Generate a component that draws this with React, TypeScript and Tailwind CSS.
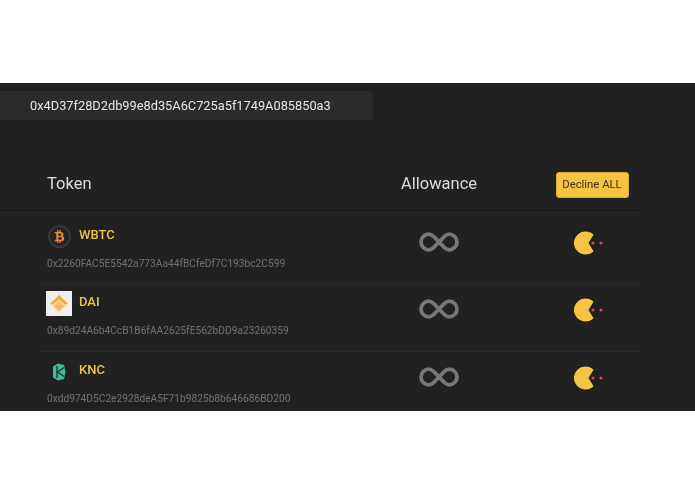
import { FaBtc } from "react-icons/fa";

const font = "font-['Roboto',_'Liberation_Sans',_sans-serif]";

function WbtcIcon() {
  return (
    <div className="flex h-[25px] w-[26px] items-center justify-center">
      <div className="flex h-[23px] w-[23px] items-center justify-center rounded-full border-2 border-[#363644] bg-[#2a2320] text-[#e08a35]">
        <FaBtc size={13} />
      </div>
    </div>
  );
}

function DaiIcon() {
  return (
    <div className="flex h-[25px] w-[26px] items-center justify-center bg-[#eeeeee]">
      <svg width="20" height="20" viewBox="0 0 20 20">
        <path d="M10 1 L19 10 L10 19 L1 10 Z" fill="#f9d9a0" />
        <path d="M10 1 L19 10 L15.5 10 L10 5.5 L4.5 10 L1 10 Z" fill="#f5ac37" />
        <path d="M10 7.5 L14 11 L6 11 Z" fill="#f8c170" />
        <path d="M4.5 11 L15.5 11 L10 17 Z" fill="#f6b85a" />
      </svg>
    </div>
  );
}

function KncIcon() {
  return (
    <div className="flex h-[25px] w-[26px] items-center justify-center">
      <svg width="14" height="18" viewBox="0 0 14 18">
        <path d="M1 3.5 L6 0.5 L12 2 L13.5 9 L12 16 L6 17.5 L1 14.5 Z" fill="#45b99c" />
        <path d="M5 3 V15" stroke="#1f2b28" strokeWidth="1.3" />
        <path d="M12 4.5 L5.5 9 L12 13.5" stroke="#1f2b28" strokeWidth="1.3" fill="none" />
      </svg>
    </div>
  );
}

function InfinityIcon() {
  return (
    <svg width="40" height="22" viewBox="0 0 40 22" fill="none">
      <path
        d="M20 11 L14.8 5.6 C13.3 4.2 11.5 3.2 9.7 3.2 C5.5 3.2 2 6.7 2 11 C2 15.3 5.5 18.8 9.7 18.8 C11.5 18.8 13.3 17.8 14.8 16.4 L25.2 5.6 C26.7 4.2 28.5 3.2 30.3 3.2 C34.5 3.2 38 6.7 38 11 C38 15.3 34.5 18.8 30.3 18.8 C28.5 18.8 26.7 17.8 25.2 16.4 Z"
        stroke="#777777"
        strokeWidth="3.8"
      />
    </svg>
  );
}

function PacmanIcon() {
  return (
    <svg width="38" height="24" viewBox="0 0 38 24" className="mt-[2px]">
      <path d="M20.5 3.8 A11.5 11.5 0 1 0 20.5 20.2 L15.5 12 Z" fill="#f6c343" />
      <circle cx="20" cy="12" r="1.6" fill="#c0504a" />
      <circle cx="28" cy="12" r="1.6" fill="#c0504a" />
    </svg>
  );
}

const rows = [
  { name: "WBTC", address: "0x2260FAC5E5542a773Aa44fBCfeDf7C193bc2C599", icon: <WbtcIcon />, pad: "pt-[13px] h-[73px]" },
  { name: "DAI", address: "0x89d24A6b4CcB1B6fAA2625fE562bDD9a23260359", icon: <DaiIcon />, pad: "pt-[7px] h-[68px]" },
  { name: "KNC", address: "0xdd974D5C2e2928deA5F71b9825b8b646686BD200", icon: <KncIcon />, pad: "pt-[7px] h-[68px]" },
];

export default function App() {
  return (
    <div className={`h-[494px] w-[695px] overflow-hidden bg-white ${font}`}>
      <div className="mt-[83px] h-[328px] overflow-hidden bg-[#212121] pt-2 blur-[0.35px]">
        <div className="flex h-[29px] w-[373px] items-center rounded-r-[3px] bg-[#2b2b2b] pl-[30px] text-[12.8px] text-[#e6e6e6]">
          0x4D37f28D2db99e8d35A6C725a5f1749A085850a3
        </div>

        <div className="mt-[36px] w-[640px]">
          <div className="flex h-[55px] items-start border-b border-[#141414] pl-[47px] text-[16.5px] text-[#dddddd]">
            <div className="w-[287px] pt-[16px]">Token</div>
            <div className="w-[210px] pt-[16px] text-center">Allowance</div>
            <div className="flex w-[96px] justify-center">
              <button className="mt-[16px] h-[26px] w-[73px] rounded-[3px] border border-[#d9a93a] bg-[#f6c343] text-[11.3px] text-[#3d3014]">
                Decline ALL
              </button>
            </div>
          </div>

          {rows.map((row) => (
            <div key={row.name} className={`ml-[37px] flex border-b border-[#2a2a2a] pl-[9px] ${row.pad}`}>
              <div className="w-[288px]">
                <div className="flex h-[25px] items-center gap-[7px]">
                  {row.icon}
                  <span className="-mt-[3px] text-[13px] font-medium text-[#eec24a]">{row.name}</span>
                </div>
                <div className="mt-[8px] ml-px text-[10.2px] leading-[14px] whitespace-nowrap text-[#707070]">{row.address}</div>
              </div>
              <div className="flex h-[36px] w-[210px] items-center justify-center">
                <InfinityIcon />
              </div>
              <div className="flex h-[36px] w-[96px] items-center justify-center">
                <PacmanIcon />
              </div>
            </div>
          ))}
        </div>
      </div>
    </div>
  );
}
